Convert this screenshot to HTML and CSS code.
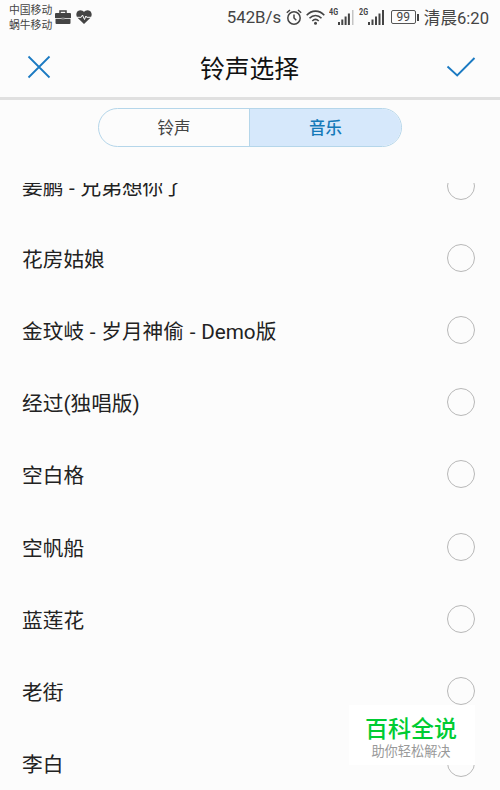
FILE: index.html
```html
<!DOCTYPE html>
<html lang="zh-CN">

<head>
    <meta charset="UTF-8">
    <meta name="viewport" content="width=device-width, initial-scale=1.0">
    <title>铃声选择</title>
    <link rel="stylesheet" href="styles.css">
</head>

<body>
    <div class="screen">
        <!-- Status bar -->
        <div class="status-bar">
            <div class="carriers">
                <span>中国移动</span>
                <span>蜗牛移动</span>
            </div>
            <svg class="case-icon" width="16" height="14" viewBox="0 0 16 14">
                <path d="M5 3.5V1h6v2.5" fill="none" stroke="#444" stroke-width="1.5" />
                <path d="M1 3h14q1 0 1 1v4H0V4q0-1 1-1z" fill="#444" />
                <path d="M.5 8.700h15V13q0 1-1 1h-13q-1 0-1-1z" fill="#444" />
                <path d="M6.500 7.500h3v2h-3z" fill="#888" />
            </svg>
            <svg class="heart-icon" width="16" height="14" viewBox="0 0 16 14">
                <path d="M8 14L1.500 7.800C-.8 5 .3.3 4.200.2 6 .2 7.300 1 8 2 8.700 1 10 .2 11.800.2c3.900.1 5 4.800 2.700 7.600z" fill="#444" />
                <path d="M.5 7.300h4.700L6.500 5l2 4.500 1.400-3.500.8 1.300h4.800" fill="none" stroke="#fcfcfc" stroke-width="1" />
            </svg>
            <span class="speed">542B/s</span>
            <svg class="alarm-icon" width="16" height="17" viewBox="0 0 16 17" fill="none" stroke="#444" stroke-width="1.500">
                <circle cx="8" cy="9" r="6.200" />
                <path d="M8 5.500V9l2.300 2.300M.8 3.800L4 1M15.200 3.800L12 1" />
            </svg>
            <svg class="wifi-icon" width="19" height="15" viewBox="0 0 19 15" fill="none" stroke="#444" stroke-width="1.600">
                <path d="M.7 5.200C5.700-.2 13.300-.2 18.300 5.200M3.500 8.200c3.500-3.700 8.500-3.700 12 0M6.300 11c2-2 4.400-2 6.400 0" />
                <circle cx="9.500" cy="13.300" r="1.500" fill="#444" stroke="none" />
            </svg>
            <span class="net">4G</span>
            <svg class="signal" width="16" height="15" viewBox="0 0 16 15" fill="#444">
                <path d="M0 12h2v3H0zM3.300 9.500h2V15h-2zM6.600 6.500h2V15h-2zM9.900 3.500h2V15h-2z" />
                <path d="M14 0h1.500v15H14z" fill="#c4c4c4" />
            </svg>
            <span class="net net-2">2G</span>
            <svg class="signal" width="16" height="15" viewBox="0 0 16 15" fill="#444">
                <path d="M0 12h2v3H0zM3.500 9.500h2V15h-2zM7 6.500h2V15H7zM10.500 3.500h2V15h-2zM14 0h2v15h-2z" />
            </svg>
            <span class="battery">99</span>
            <span class="clock">清晨6:20</span>
        </div>

        <!-- Title bar -->
        <div class="title-bar">
            <svg width="24" height="24" viewBox="0 0 24 24">
                <path d="M1.500 1.500l21 21M22.500 1.500l-21 21" fill="none" stroke="#1b7ac2" stroke-width="1.800" />
            </svg>
            <h1>铃声选择</h1>
            <svg width="30" height="22" viewBox="0 0 30 22">
                <path d="M1.500 10.500l9.700 9L28.500 2" fill="none" stroke="#1b7ac2" stroke-width="1.900" />
            </svg>
        </div>

        <div class="tabs">
            <div class="tab">铃声</div>
            <div class="tab active">音乐</div>
        </div>

        <!-- Song list, scrolled part of a row down -->
        <div class="list">
            <div class="row"><span>姜鹏 - 兄弟想你了</span><i class="radio"></i></div>
            <div class="row"><span>花房姑娘</span><i class="radio"></i></div>
            <div class="row"><span>金玟岐 - 岁月神偷 - Demo版</span><i class="radio"></i></div>
            <div class="row"><span>经过(独唱版)</span><i class="radio"></i></div>
            <div class="row"><span>空白格</span><i class="radio"></i></div>
            <div class="row"><span>空帆船</span><i class="radio"></i></div>
            <div class="row"><span>蓝莲花</span><i class="radio"></i></div>
            <div class="row"><span>老街</span><i class="radio"></i></div>
            <div class="row"><span>李白</span><i class="radio"></i></div>
        </div>

        <div class="badge">
            <strong>百科全说</strong>
            <span>助你轻松解决</span>
        </div>
    </div>
</body>

</html>
```

FILE: styles.css
```css
* {
    box-sizing: border-box;
}

body {
    margin: 0;
    background-color: #fcfcfc;
    color: #222;
    font-family: Roboto, "Noto Sans CJK SC", sans-serif;
}

.screen {
    position: relative;
    display: flex;
    flex-direction: column;
    width: 500px;
    height: 790px;
    overflow: hidden;
}

/* Status bar */
.status-bar {
    display: flex;
    align-items: center;
    height: 35px;
    padding: 0 11px 1px 9px;
    color: #444;
    white-space: nowrap;
}

.status-bar svg {
    flex: none;
}

.carriers {
    display: flex;
    flex-direction: column;
    width: 46px;
    padding-top: 1px;
    font-size: 10.8px;
    line-height: 15px;
}

.heart-icon {
    margin-left: 5px;
}

.speed {
    width: 54px;
    margin-left: auto;
    font-size: 16.8px;
}

.alarm-icon {
    margin-left: 5px;
}

.wifi-icon {
    margin-left: 4px;
}

.net {
    align-self: flex-start;
    width: 9px;
    margin: 7px 0 0 4px;
    font-size: 9px;
    font-weight: bold;
    line-height: 11px;
    transform: scaleX(0.8);
    transform-origin: left;
}

.net-2 {
    margin-left: 5px;
}

.battery {
    position: relative;
    width: 25px;
    height: 14px;
    margin-left: 7px;
    border: 1px solid #555;
    border-radius: 2px;
    font-size: 12px;
    line-height: 13px;
    text-align: center;
}

.battery::after {
    content: "";
    position: absolute;
    top: 3px;
    right: -4px;
    width: 2px;
    height: 7px;
    background-color: #444;
}

.clock {
    margin-left: 8px;
    font-size: 16.6px;
}

/* Title bar */
.title-bar {
    display: flex;
    align-items: center;
    justify-content: space-between;
    height: 65px;
    padding: 1px 24px 0 27px;
    border-bottom: 3px solid #e0e0e0;
}

.title-bar h1 {
    margin: 0;
    padding-left: 2px;
    color: #111;
    font-size: 24.8px;
    font-weight: normal;
}

/* Tabs */
.tabs {
    display: flex;
    width: 304px;
    height: 39px;
    margin: 8px 0 36px 98px;
    border: 1px solid #b5d6ea;
    border-radius: 20px;
    overflow: hidden;
}

.tab {
    width: 150px;
    padding-top: 1px;
    color: #444;
    font-size: 16.5px;
    line-height: 38px;
    text-align: center;
}

.tab.active {
    flex: 1;
    border-left: 1px solid #b5d6ea;
    background-color: #d6e8fb;
    color: #1479b8;
    font-weight: 500;
}

/* Song list */
.list {
    flex: 1;
    overflow: hidden;
}

.row {
    display: flex;
    align-items: center;
    justify-content: space-between;
    height: 72.2px;
    padding: 0 25px 0 22px;
    font-size: 20.7px;
    word-spacing: 0.6px;
}

.row:first-child {
    margin-top: -33.4px;
}

.radio {
    width: 28px;
    height: 28px;
    border: 1.5px solid #b8b8b8;
    border-radius: 50%;
}

/* Floating badge */
.badge {
    position: absolute;
    right: 25px;
    bottom: 25px;
    display: flex;
    flex-direction: column;
    align-items: center;
    width: 126px;
    height: 60px;
    padding: 12px 2px 0 0;
    background-color: #fff;
}

.badge strong {
    color: #0c3;
    font-size: 23px;
    font-weight: 500;
    line-height: 26px;
}

.badge span {
    color: #999;
    font-size: 13.2px;
    line-height: 18px;
}
```
